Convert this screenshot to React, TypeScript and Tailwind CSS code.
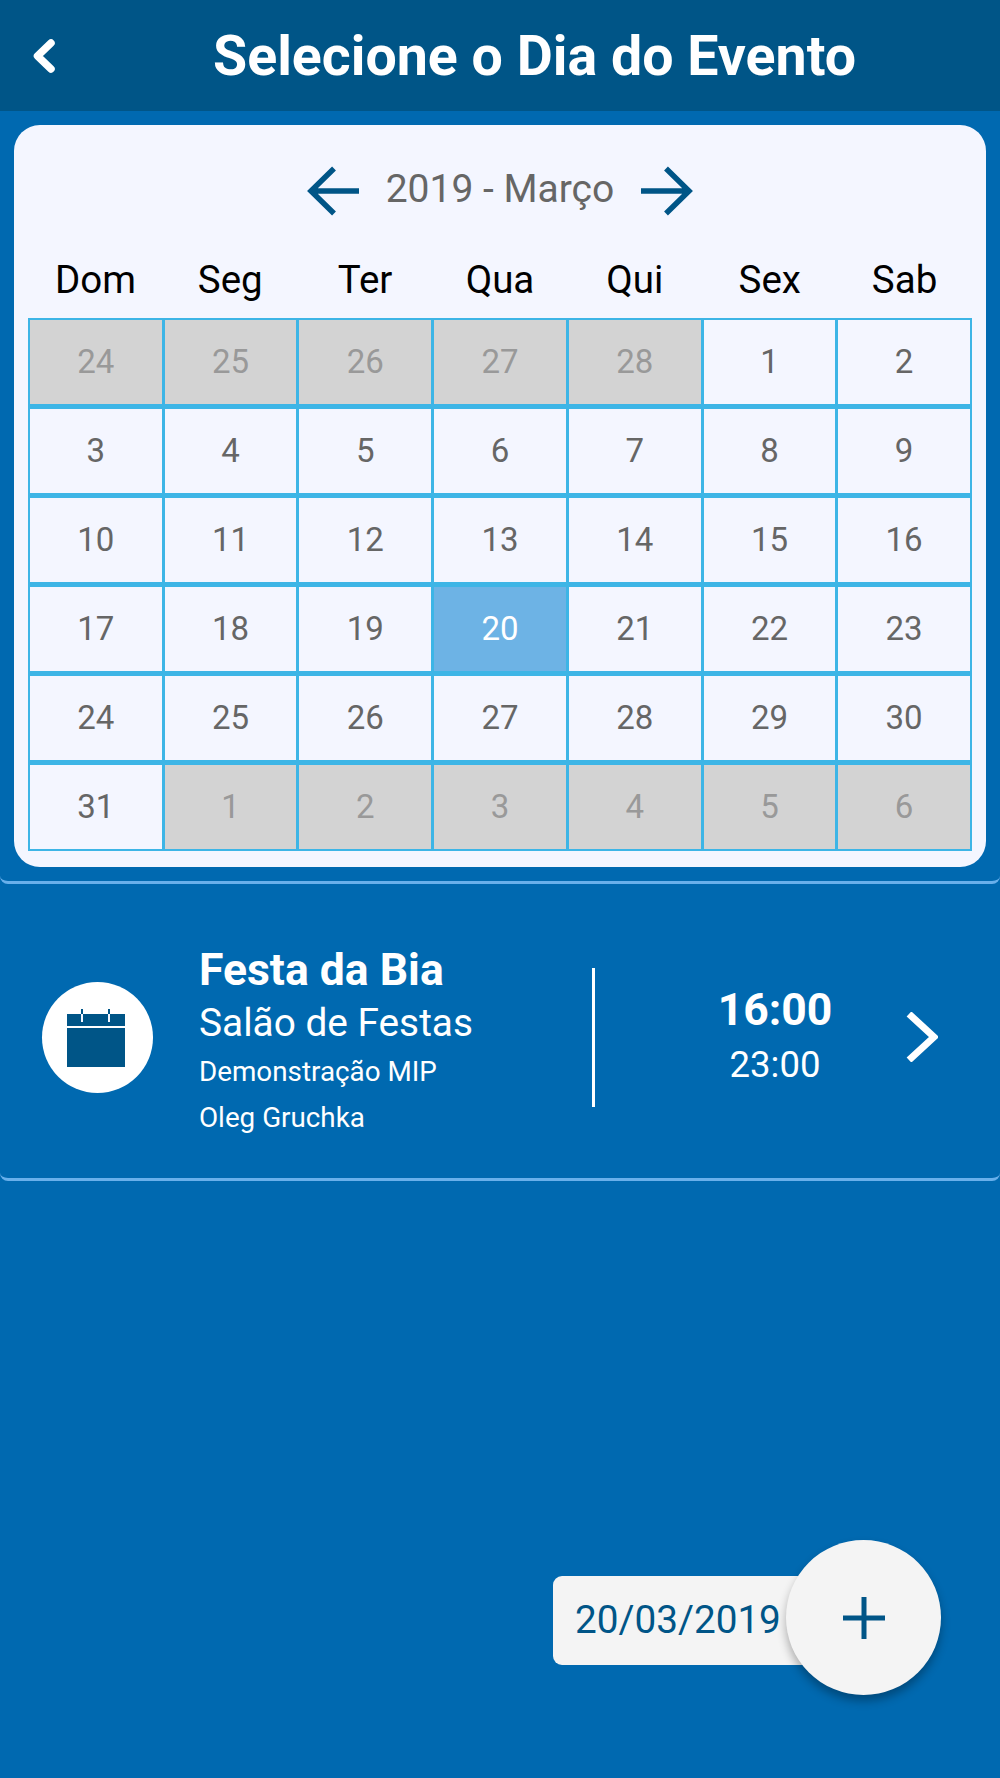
const weekdays = ['Dom', 'Seg', 'Ter', 'Qua', 'Qui', 'Sex', 'Sab']

const days = [
  ...[24, 25, 26, 27, 28].map(n => ({ n, kind: 'off' })),
  ...Array.from({ length: 31 }, (_, i) => ({ n: i + 1, kind: i + 1 === 20 ? 'selected' : 'on' })),
  ...[1, 2, 3, 4, 5, 6].map(n => ({ n, kind: 'off' })),
]

const cellStyles: Record<string, string> = {
  off: 'bg-[#d3d3d3] text-[#999999]',
  on: 'bg-[#f4f6ff] text-[#666666]',
  selected: 'bg-[#6db3e5] text-white',
}

function MonthArrow({ dir }: { dir: 'left' | 'right' }) {
  return (
    <svg width="52" height="52" viewBox="0 0 52 52" fill="none" stroke="#005587" strokeWidth="5.5">
      {dir === 'left' ? (
        <path d="M52 26H5M27 3.5 4 26l23 22.5" />
      ) : (
        <path d="M0 26h47M25 3.5 48 26 25 48.5" />
      )}
    </svg>
  )
}

export default function App() {
  return (
    <div className="relative min-h-[1778px] bg-[#0069b0] font-['Roboto',sans-serif]">
      {/* Header */}
      <header className="flex h-[111px] items-center bg-[#005587] text-white">
        <svg className="ml-[30px] shrink-0" width="28" height="38" viewBox="0 0 28 38" fill="none" stroke="white" strokeWidth="7.5" strokeLinecap="round" strokeLinejoin="round">
          <path d="M21 6 7.5 19 21 32" />
        </svg>
        <h1 className="ml-[155px] pt-[2px] text-[55.5px] font-bold leading-none">Selecione o Dia do Evento</h1>
      </header>

      {/* Calendar */}
      <div className="mx-[14px] mt-[14px] rounded-[26px] bg-[#f4f6ff] px-[14px] pt-[40px] pb-[16px]">
        <div className="flex h-[52px] items-center justify-center">
          <MonthArrow dir="left" />
          <span className="mx-[27px] pb-[4px] text-[39px] leading-none text-[#666666]">2019 - Março</span>
          <MonthArrow dir="right" />
        </div>
        <div className="mt-[14px] grid h-[87px] grid-cols-7 items-center pt-[12px]">
          {weekdays.map(day => (
            <div key={day} className="text-center text-[38.5px] leading-none text-black">{day}</div>
          ))}
        </div>
        <div className="grid grid-cols-7 gap-x-[3px] gap-y-[5px] bg-[#3db5e6] p-[2px]">
          {days.map((d, i) => (
            <div key={i} className={`flex h-[84px] items-center justify-center text-[33px] ${cellStyles[d.kind]}`}>
              {d.n}
            </div>
          ))}
        </div>
      </div>

      {/* Event list */}
      <div className="h-[17px] rounded-b-[8px] border-b-[3px] border-[#69b0eb]" />
      <div className="flex h-[297px] items-center rounded-b-[8px] border-b-[3px] border-[#69b0eb] pt-[12px] text-white">
        <div className="ml-[42px] flex size-[111px] shrink-0 items-center justify-center rounded-full bg-white">
          <svg className="ml-[-3px]" width="60" height="60" viewBox="0 0 60 60">
            <rect x="1" y="7" width="58" height="12" fill="#005587" />
            <rect x="1" y="21" width="58" height="39" fill="#005587" />
            <path d="M16 2v5M43 2v5" stroke="#005587" strokeWidth="2" />
            <path d="M16 7v8M43 7v8" stroke="#f4f6ff" strokeWidth="2" />
          </svg>
        </div>
        <div className="ml-[46px] w-[393px] pt-[10px]">
          <div className="text-[44.5px] leading-[52px] font-bold">Festa da Bia</div>
          <div className="text-[38.8px] leading-[53px]">Salão de Festas</div>
          <div className="text-[27.8px] leading-[46px]">Demonstração MIP</div>
          <div className="text-[27.8px] leading-[46px]">Oleg Gruchka</div>
        </div>
        <div className="h-[139px] w-[3px] shrink-0 bg-white" />
        <div className="ml-[68px] w-[224px] pt-[2px] text-center">
          <div className="text-[44.5px] leading-[54px] font-bold">16:00</div>
          <div className="text-[36.5px] leading-[56px]">23:00</div>
        </div>
        <svg className="ml-[19px] shrink-0" width="32" height="50" viewBox="0 0 32 50" fill="none" stroke="white" strokeWidth="7">
          <path d="M3 2l25 23L3 48" />
        </svg>
      </div>

      {/* Date + add button */}
      <div className="absolute top-[1540px] left-[553px] flex h-[155px] items-center">
        <div className="mt-[6px] flex h-[89px] w-[261px] items-center rounded-[9px] bg-[#f4f4f4] pl-[22px] text-[38.7px] text-[#005587]">
          20/03/2019
        </div>
        <div className="ml-[-28px] flex size-[155px] items-center justify-center rounded-full bg-[#f4f4f4] shadow-[0_6px_10px_rgba(0,0,0,0.3)]">
          <svg width="42" height="42" viewBox="0 0 42 42" stroke="#005587" strokeWidth="5">
            <path d="M21 0v42M0 21h42" />
          </svg>
        </div>
      </div>
    </div>
  )
}
